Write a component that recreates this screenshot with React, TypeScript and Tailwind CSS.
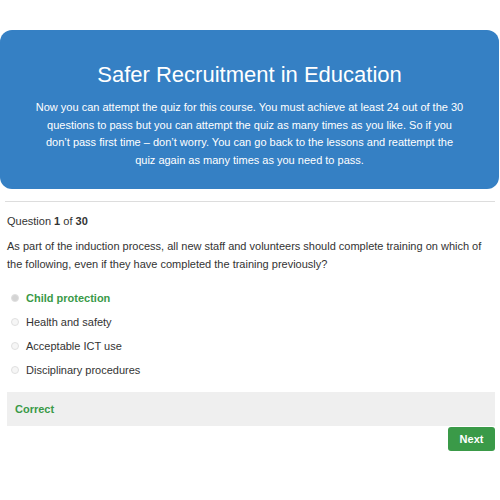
import React from "react";

const options = [
  { label: "Child protection", correct: true },
  { label: "Health and safety" },
  { label: "Acceptable ICT use" },
  { label: "Disciplinary procedures" },
];

export default function App() {
  return (
    <div
      className="w-[500px] h-[500px] bg-white overflow-hidden"
      style={{ fontFamily: '"Liberation Sans", Arial, sans-serif' }}
    >
      <div className="pt-[30px] pr-[1px]">
        <div className="bg-[#3580c4] rounded-[12px] h-[159px] flex flex-col items-center text-white">
          <h1 className="mt-[32px] text-[22px] leading-[26px]">Safer Recruitment in Education</h1>
          <p className="mt-[11px] text-[11px] leading-[17.6px] text-center px-[30px]">
            Now you can attempt the quiz for this course. You must achieve at least 24 out of the 30
            <br />
            questions to pass but you can attempt the quiz as many times as you like. So if you
            <br />
            don’t pass first time – don’t worry. You can go back to the lessons and reattempt the
            <br />
            quiz again as many times as you need to pass.
          </p>
        </div>
      </div>
      <div className="mx-[5px] mt-[12px] h-[1px] bg-[#dddddd]" />
      <div className="px-[7px] text-[#333333]">
        <div className="mt-[11px] text-[11px] leading-[16px]">
          Question <b>1</b> of <b>30</b>
        </div>
        <div className="mt-[8px] text-[11px] leading-[18px]">
          As part of the induction process, all new staff and volunteers should complete training on which of the following, even if they have completed the training previously?
        </div>
        <div className="mt-[17px] flex flex-col gap-[8px]">
          {options.map((o) => (
            <div key={o.label} className="flex items-center h-[16px]">
              <span
                className={
                  "ml-[4px] w-[8px] h-[8px] rounded-full border border-[#e0e0e0] " +
                  (o.correct ? "bg-[#d4d4d4]" : "bg-[#f6f6f6]")
                }
              />
              <span
                className={
                  "ml-[7px] text-[11px] " +
                  (o.correct ? "font-bold text-[#3a9a48]" : "text-[#333333]")
                }
              >
                {o.label}
              </span>
            </div>
          ))}
        </div>
        <div className="mt-[14px] mr-[-2px] h-[34px] bg-[#efefef] flex items-center px-[8px]">
          <span className="text-[11px] font-bold text-[#3a9a48]">Correct</span>
        </div>
        <div className="flex justify-end mr-[-2px]">
          <button className="mt-[1px] w-[47px] h-[24px] rounded-[3px] bg-[#3a9a48] text-white text-[11px] font-bold">
            Next
          </button>
        </div>
      </div>
    </div>
  );
}
